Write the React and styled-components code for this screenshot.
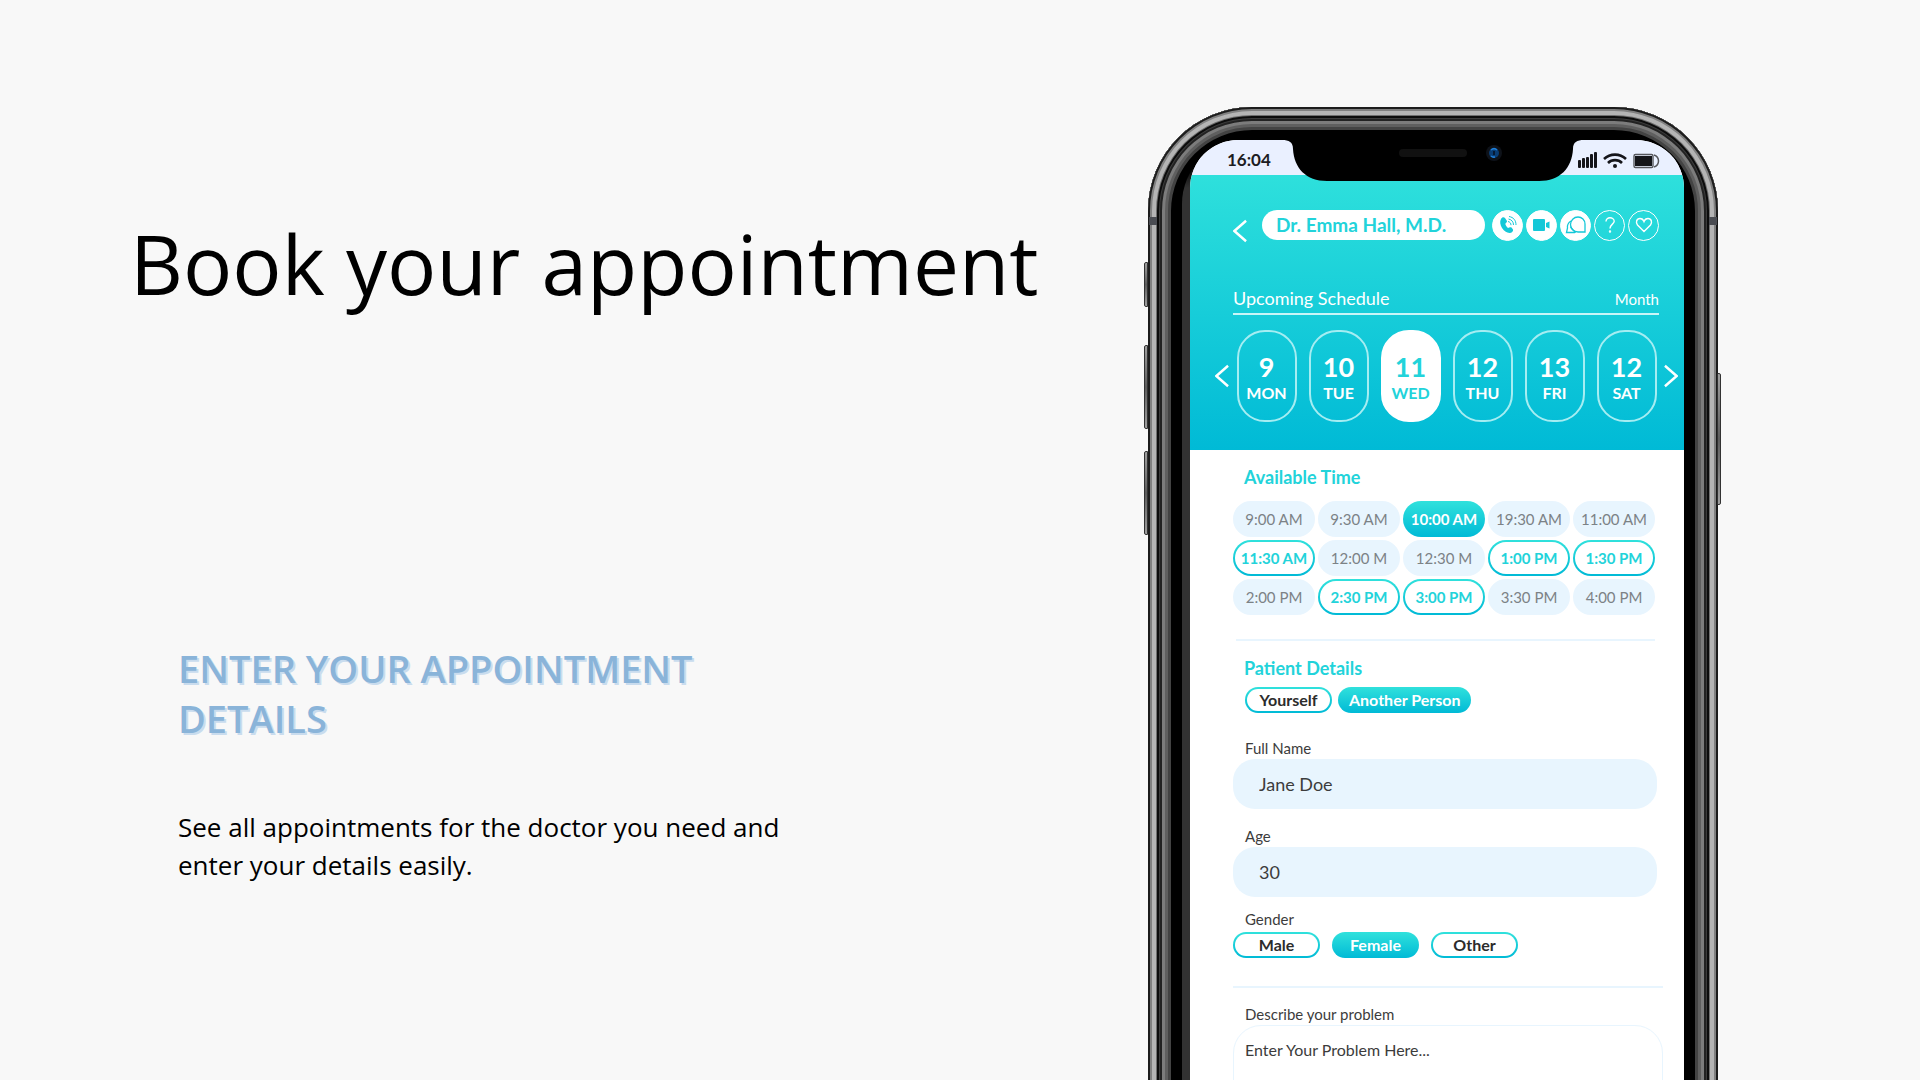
import React, { useState } from "react";
import styled, { createGlobalStyle } from "styled-components";

const aqua = "linear-gradient(180deg, #30e1dc 0%, #00bad6 100%)";
const aquaText = "#22d3da";
const tint = "#e8f5fe";
const appFont = '"Lato", "Open Sans", sans-serif';
const slideFont = '"Open Sans", "Noto Sans", sans-serif';

const GlobalStyle = createGlobalStyle`
  *, *::before, *::after { box-sizing: border-box; }
  body { margin: 0; background: #f8f8f8; }
  button, input, textarea { font: inherit; color: inherit; margin: 0; }
  button { border: 0; padding: 0; background: none; cursor: pointer; }
`;

const Page = styled.main`
  display: flex;
  justify-content: space-between;
  align-items: flex-start;
  gap: 40px;
  height: 100vh;
  overflow: hidden;
  padding: 107px 202px 0 130px;
  background: #f8f8f8;
  font-family: ${slideFont};
  color: #000;
`;

const Copy = styled.section`
  flex: 1;
  padding-top: 96px;
`;

const Title = styled.h1`
  margin: 0;
  font-size: 82px;
  line-height: 120px;
  font-weight: 400;
  white-space: nowrap;
`;

const Details = styled.div`
  max-width: 640px;
  margin: 320px 0 0 48px;
`;

const Subtitle = styled.h2`
  max-width: 580px;
  margin: 0;
  font-size: 38px;
  line-height: 50px;
  font-weight: 600;
  color: #8ab4d9;
  text-shadow: 2px 2px 0 #c9dcee;
`;

const Lead = styled.p`
  margin: 65px 0 0;
  font-size: 26px;
  line-height: 38px;
`;

const Phone = styled.div`
  position: relative;
  flex: none;
  width: 570px;
  padding: 33px 34px 60px;
  border-radius: 104px;
  background: #000;
  box-shadow:
    inset 0 0 0 2px #1c1c1c,
    inset 0 0 0 4px #808080,
    inset 0 0 0 8px #b4b4b4,
    inset 0 0 0 9px #6e6e6e,
    inset 0 0 0 11px #0c0c0c,
    inset 0 0 0 12px #3c3c3c,
    inset 0 0 0 14px #222,
    inset 0 0 0 17px #7c7c7c,
    inset 0 0 0 20px #5f5f5f,
    inset 0 0 0 23px #434343;
`;

const SideKey = styled.span`
  position: absolute;
  top: ${(p) => p.$top}px;
  ${(p) => p.$side}: ${(p) => (p.$side === "left" ? -4 : -3)}px;
  width: 4px;
  height: ${(p) => p.$height}px;
  border: 1px solid #333;
  border-radius: ${(p) => (p.$side === "left" ? "2px 0 0 2px" : "0 2px 2px 0")};
  background: linear-gradient(#a0a0a0, #5c5c5c 50%, #a0a0a0);
`;

const Antenna = styled.span`
  position: absolute;
  top: 110px;
  ${(p) => p.$side}: 1px;
  width: 8px;
  height: 8px;
  background: #4a4c52;
`;

const Well = styled.div`
  padding-left: 8px;
  border-radius: 64px 48px 0 0;
  background: linear-gradient(#000 24px, #323232 48px);
`;

const Screen = styled.div`
  overflow: hidden;
  border-radius: 48px 48px 0 0;
  background: #fff;
  font-family: ${appFont};
`;

const NotchArt = styled.svg`
  position: absolute;
  top: 32px;
  left: 134px;
  display: block;
`;

const StatusBar = styled.div`
  display: flex;
  justify-content: space-between;
  align-items: center;
  height: 35px;
  padding: 4px 24px 0 37px;
  background: #eaf0ff;
  color: #1c1c22;
  font-size: 17px;
  line-height: 24px;
  font-weight: 700;
`;

const StatusIcons = styled.svg`
  display: block;
`;

const Header = styled.header`
  padding: 34px 25px 28px 43px;
  background: linear-gradient(180deg, #2ee0dc 0%, #00bad6 100%);
  color: #fff;
`;

const DoctorBar = styled.div`
  display: flex;
  align-items: center;
  height: 32px;
`;

const IconButton = styled.button`
  display: grid;
  place-items: center;
  flex: none;
`;

const BackButton = styled(IconButton)`
  margin: 12px 15px 0 0;
`;

const DoctorName = styled.div`
  flex: 1;
  height: 30px;
  margin-right: 7px;
  padding: 0 14px;
  border-radius: 15px;
  background: #fff;
  color: ${aquaText};
  font-size: 19px;
  line-height: 30px;
  font-weight: 700;
`;

const Actions = styled.div`
  display: flex;
  gap: 3px;
`;

const RoundButton = styled(IconButton)`
  width: 31px;
  height: 31px;
  border-radius: 50%;
  border: 1px solid #fff;
  background: ${(p) => (p.$solid ? "#fff" : "transparent")};
  color: ${(p) => (p.$solid ? "#14c8d8" : "#fff")};
`;

const ScheduleHead = styled.div`
  display: flex;
  justify-content: space-between;
  align-items: baseline;
  height: 34px;
  margin-top: 40px;
  padding-top: 5px;
  border-bottom: 2px solid #c9f5f7;
  line-height: 24px;
`;

const ScheduleTitle = styled.h3`
  margin: 0;
  font-size: 18px;
  font-weight: 400;
`;

const MonthButton = styled.button`
  font-size: 15px;
`;

const Week = styled.div`
  display: flex;
  align-items: center;
  justify-content: space-between;
  margin: 15px -19px 0 -18px;
`;

const Days = styled.div`
  display: flex;
  gap: 12px;
`;

const Day = styled.button`
  display: flex;
  flex-direction: column;
  align-items: center;
  justify-content: center;
  width: 60px;
  height: 92px;
  padding-top: 4px;
  border: 2px solid ${(p) => (p.$active ? "#fff" : "#a5edf2")};
  border-radius: 28px;
  background: ${(p) => (p.$active ? "#fff" : "transparent")};
  color: ${(p) => (p.$active ? aquaText : "#fff")};
  font-weight: 700;
`;

const DayNumber = styled.span`
  font-size: 27px;
  line-height: 30px;
`;

const DayName = styled.span`
  font-size: 16px;
  line-height: 22px;
`;

const Body = styled.div`
  padding: 0 21px 0 43px;
  color: #3c3c3c;
`;

const SectionTitle = styled.h3`
  margin: 0 0 0 11px;
  color: ${aquaText};
  font-size: 18px;
  line-height: 24px;
  font-weight: 700;
`;

const Block = styled.section`
  padding-top: ${(p) => p.$top}px;
`;

const Times = styled.div`
  display: grid;
  grid-template-columns: repeat(5, 1fr);
  gap: 3px;
  margin: 12px 8px 24px 0;
`;

const slotLook = {
  taken: `background: ${tint}; color: #7c8286; font-weight: 400; border: 2px solid ${tint};`,
  open: `background: linear-gradient(#fff, #fff) padding-box, ${aqua} border-box; color: ${aquaText}; font-weight: 700; border: 2px solid transparent;`,
  chosen: `background: ${aqua} border-box; color: #fff; font-weight: 700; border: 2px solid transparent;`,
};

const Slot = styled.button`
  height: 36px;
  border-radius: 18px;
  font-size: 15px;
  line-height: 20px;
  white-space: nowrap;
  ${(p) => slotLook[p.$state]}
`;

const Rule = styled.hr`
  height: 2px;
  margin: 0 ${(p) => (p.$inset ? 8 : 0)}px 0 ${(p) => (p.$inset ? 3 : 0)}px;
  border: 0;
  background: ${tint};
`;

const Chips = styled.div`
  display: flex;
  gap: ${(p) => p.$gap}px;
  margin: ${(p) => p.$top}px 0 0 ${(p) => p.$indent}px;
`;

const Chip = styled.label`
  position: relative;
  min-width: 87px;
  height: 26px;
  padding: 0 9px;
  border: 2px solid transparent;
  border-radius: 13px;
  background: linear-gradient(#fff, #fff) padding-box, ${aqua} border-box;
  color: #2c2c2c;
  font-size: 16px;
  line-height: 22px;
  font-weight: 700;
  text-align: center;
  cursor: pointer;

  &:has(input:checked) {
    background: ${aqua} border-box;
    color: #fff;
  }
`;

const ChipInput = styled.input`
  position: absolute;
  inset: 0;
  opacity: 0;
  cursor: pointer;
`;

const Label = styled.label`
  display: block;
  margin: 0 0 1px 12px;
  font-size: 15px;
  line-height: 20px;
`;

const GroupLabel = styled(Label).attrs({ as: "div" })`
  margin-bottom: 0;
`;

const TextBox = styled.input`
  display: block;
  width: 424px;
  max-width: 100%;
  height: 50px;
  padding: 0 26px;
  border: 0;
  border-radius: 22px;
  background: ${tint};
  font-size: 18px;
  outline: none;
`;

const Problem = styled.textarea`
  display: block;
  width: 100%;
  height: 180px;
  padding: 12px 11px;
  border: 1px solid ${tint};
  border-radius: 28px;
  background: #fff;
  font-size: 16px;
  line-height: 24px;
  resize: none;
  outline: none;

  &::placeholder { color: #3c3c3c; opacity: 1; }
`;

function Chevron({ right }) {
  return (
    <svg width="14" height="24" viewBox="0 0 15 24" fill="none" stroke="currentColor" strokeWidth="2.6">
      <path d={right ? "M1 1l12.500 11L1 23" : "M14 1L1.500 12 14 23"} />
    </svg>
  );
}

function Notch() {
  return (
    <NotchArt width="302" height="44" viewBox="0 0 302 44" aria-hidden="true">
      <path d="M0 0H302V1C295 1 291 3 291 10C290 29 278 42 257 42H45C24 42 12 29 11 10C11 3 7 1 0 1Z" fill="#000" />
      <rect x="117" y="10" width="68" height="8" rx="4" fill="#111" />
      <circle cx="212" cy="14" r="8" fill="#0e1219" />
      <circle cx="212" cy="14" r="5" fill="#0a3d74" />
      <path d="M209 11a4.500 4.500 0 0 1 6 0M209 17a4.500 4.500 0 0 0 4 1" stroke="#1f7fd8" strokeWidth="1.600" fill="none" />
      <rect x="211" y="12" width="2" height="4" fill="#061a33" />
    </NotchArt>
  );
}

function StatusArt() {
  return (
    <StatusIcons width="82" height="18" viewBox="0 0 82 18" aria-hidden="true">
      <g fill="#15151a">
        <rect x="0" y="9" width="3" height="8" rx="1" />
        <rect x="4" y="7" width="3" height="10" rx="1" />
        <rect x="8" y="6" width="3" height="11" rx="1" />
        <rect x="12" y="3" width="3" height="14" rx="1" />
        <rect x="16" y="1" width="3" height="16" rx="1" />
        <circle cx="37" cy="15" r="2" />
        <rect x="57" y="5" width="17" height="10" />
      </g>
      <g fill="none" stroke="#15151a" strokeWidth="2.600">
        <path d="M26 8a16 16 0 0 1 22 0" />
        <path d="M30 12a10 10 0 0 1 14 0" />
      </g>
      <rect x="56" y="3.500" width="19" height="13" rx="1.500" fill="none" stroke="#55565c" strokeWidth="1.400" />
      <path d="M76 4c6 2 6 10 0 12" fill="none" stroke="#55565c" strokeWidth="1.500" />
    </StatusIcons>
  );
}

const PhoneIcon = () => (
  <svg width="20" height="20" viewBox="0 0 20 20">
    <path d="M3 4C4 2 6 2 7 3l2 3c0 2-2 2-1.500 3.500S9 12 10 13c1.200 0 2-1.200 3.500-.5l1.500 2c.5 1.500-1 3.500-3.500 3.500C6 18 0 9 3 4z" fill="currentColor" />
    <path d="M10 6.500c2 .5 3 1.800 3 3.700M10.500 4c3.200.7 5 2.800 5 6M11 1.500c4.500.8 7 3.800 7 8.500" fill="none" stroke="currentColor" />
  </svg>
);
const VideoIcon = () => (
  <svg width="19" height="14" viewBox="0 0 19 14" fill="currentColor">
    <rect x="1" y="1" width="12" height="12" rx="1" />
    <path d="M14 5l3.500-1.500v7L14 9z" />
  </svg>
);
const ChatIcon = () => (
  <svg width="22" height="20" viewBox="0 0 22 20" fill="none" stroke="currentColor" strokeWidth="1.300">
    <path d="M13 2a7 7 0 0 1 7 7v8h-7a7.500 7.500 0 1 1 0-15z" />
    <path d="M6 6C3 8 2 10 2.500 13L1.500 17.500h8C12 17.500 7 15.500 5.500 11.500" />
  </svg>
);
const HelpIcon = () => (
  <svg width="14" height="18" viewBox="0 0 14 18" fill="none" stroke="currentColor" strokeWidth="1.400">
    <path d="M3 5.500C3 3 4.800 1.800 7 1.800s4.200 1.400 4.200 3.500C11.200 8 7 8.500 7 12.500" />
    <circle cx="7" cy="15.500" r=".5" />
  </svg>
);
const HeartIcon = () => (
  <svg width="18" height="16" viewBox="0 0 18 16" fill="none" stroke="currentColor" strokeWidth="1.400">
    <path d="M9 14.500L2.500 8C.5 5.500 1.500 1.500 5 1.500c2 0 3.300 1.200 4 3 .7-1.800 2-3 4-3 3.500 0 4.500 4 2.500 6.500z" />
  </svg>
);

const days = [
  ["9", "MON"], ["10", "TUE"], ["11", "WED"],
  ["12", "THU"], ["13", "FRI"], ["12", "SAT"],
];

const slots = [
  ["9:00 AM", "taken"], ["9:30 AM", "taken"], ["10:00 AM", "open"], ["19:30 AM", "taken"], ["11:00 AM", "taken"],
  ["11:30 AM", "open"], ["12:00 M", "taken"], ["12:30 M", "taken"], ["1:00 PM", "open"], ["1:30 PM", "open"],
  ["2:00 PM", "taken"], ["2:30 PM", "open"], ["3:00 PM", "open"], ["3:30 PM", "taken"], ["4:00 PM", "taken"],
];

function ChipGroup({ name, options, initial, gap, indent, top }) {
  return (
    <Chips role="radiogroup" aria-label={name} $gap={gap} $indent={indent} $top={top}>
      {options.map((option) => (
        <Chip key={option}>
          <ChipInput type="radio" name={name} value={option} defaultChecked={option === initial} />
          {option}
        </Chip>
      ))}
    </Chips>
  );
}

export default function App() {
  const [day, setDay] = useState(2);
  const [time, setTime] = useState("10:00 AM");

  return (
    <>
      <GlobalStyle />
      <Page>
        <Copy>
          <Title>Book your appointment</Title>
          <Details>
            <Subtitle>ENTER YOUR APPOINTMENT DETAILS</Subtitle>
            <Lead>See all appointments for the doctor you need and enter your details easily.</Lead>
          </Details>
        </Copy>

        <Phone>
          <SideKey $side="left" $top={155} $height={45} />
          <SideKey $side="left" $top={238} $height={84} />
          <SideKey $side="left" $top={344} $height={84} />
          <SideKey $side="right" $top={266} $height={132} />
          <Antenna $side="left" />
          <Antenna $side="right" />
          <Well>
            <Screen>
              <StatusBar>
                <span>16:04</span>
                <StatusArt />
              </StatusBar>

              <Header>
                <DoctorBar>
                  <BackButton aria-label="Back"><Chevron /></BackButton>
                  <DoctorName>Dr. Emma Hall, M.D.</DoctorName>
                  <Actions>
                    <RoundButton $solid aria-label="Call"><PhoneIcon /></RoundButton>
                    <RoundButton $solid aria-label="Video call"><VideoIcon /></RoundButton>
                    <RoundButton $solid aria-label="Chat"><ChatIcon /></RoundButton>
                    <RoundButton aria-label="Help"><HelpIcon /></RoundButton>
                    <RoundButton aria-label="Favourite"><HeartIcon /></RoundButton>
                  </Actions>
                </DoctorBar>
                <ScheduleHead>
                  <ScheduleTitle>Upcoming Schedule</ScheduleTitle>
                  <MonthButton>Month</MonthButton>
                </ScheduleHead>
                <Week>
                  <IconButton aria-label="Previous days"><Chevron /></IconButton>
                  <Days>
                    {days.map(([number, name], i) => (
                      <Day key={name} $active={i === day} aria-pressed={i === day} onClick={() => setDay(i)}>
                        <DayNumber>{number}</DayNumber>
                        <DayName>{name}</DayName>
                      </Day>
                    ))}
                  </Days>
                  <IconButton aria-label="Next days"><Chevron right /></IconButton>
                </Week>
              </Header>

              <Body>
                <Block $top={15}>
                  <SectionTitle>Available Time</SectionTitle>
                  <Times>
                    {slots.map(([label, state]) => (
                      <Slot
                        key={label}
                        $state={label === time ? "chosen" : state}
                        disabled={state === "taken"}
                        onClick={() => setTime(label)}
                      >
                        {label}
                      </Slot>
                    ))}
                  </Times>
                  <Rule $inset />
                </Block>

                <Block $top={15}>
                  <SectionTitle>Patient Details</SectionTitle>
                  <ChipGroup name="Patient" options={["Yourself", "Another Person"]} initial="Another Person" gap={6} indent={12} top={7} />
                </Block>

                <Block $top={25}>
                  <Label htmlFor="full-name">Full Name</Label>
                  <TextBox id="full-name" defaultValue="Jane Doe" />
                </Block>
                <Block $top={17}>
                  <Label htmlFor="age">Age</Label>
                  <TextBox id="age" defaultValue="30" />
                </Block>
                <Block $top={12}>
                  <GroupLabel>Gender</GroupLabel>
                  <ChipGroup name="Gender" options={["Male", "Female", "Other"]} initial="Female" gap={12} indent={0} top={3} />
                </Block>

                <Block $top={28}>
                  <Rule />
                </Block>
                <Block $top={16}>
                  <Label htmlFor="problem">Describe your problem</Label>
                  <Problem id="problem" placeholder="Enter Your Problem Here..." />
                </Block>
              </Body>
            </Screen>
          </Well>
          <Notch />
        </Phone>
      </Page>
    </>
  );
}
